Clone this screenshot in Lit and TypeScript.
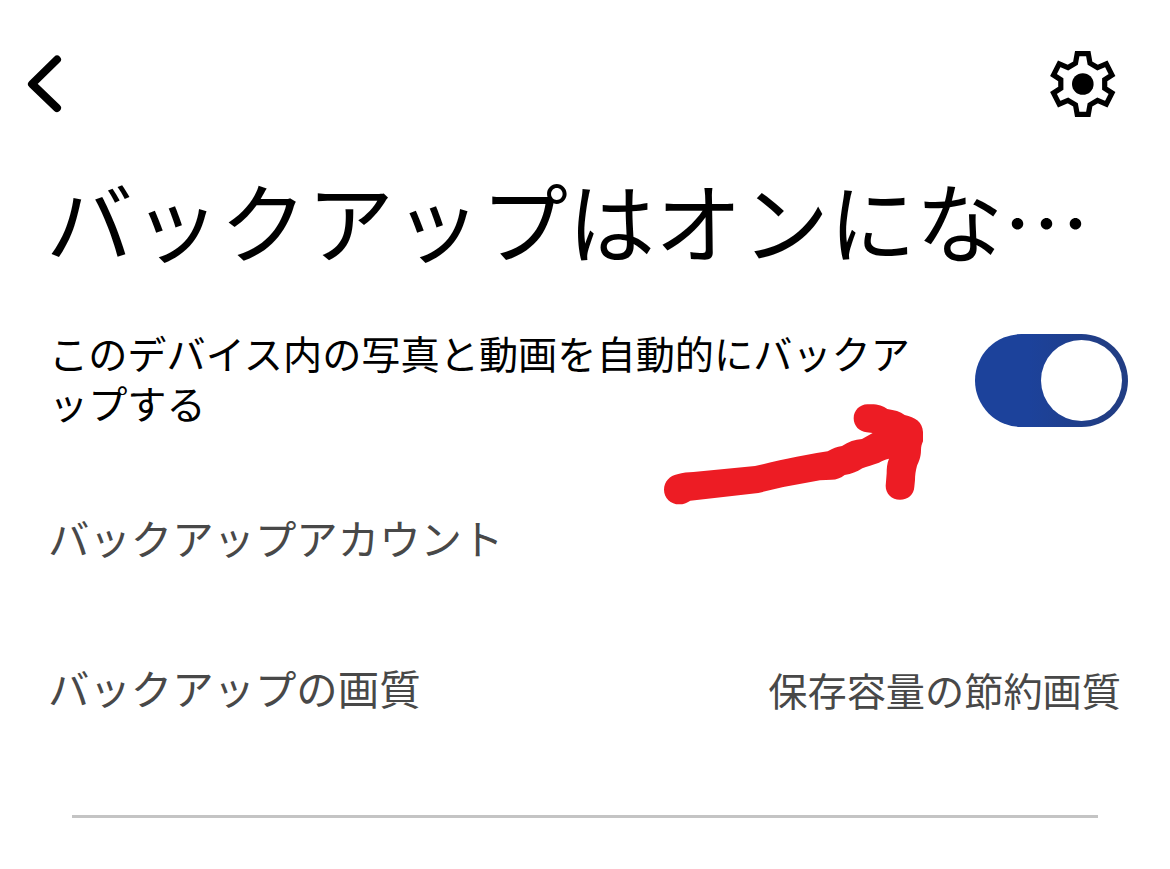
import { LitElement, html, css } from "lit";
import { customElement, property } from "lit/decorators.js";

@customElement("toggle-switch")
class ToggleSwitch extends LitElement {
  @property({ type: Boolean, reflect: true }) checked = false;

  static styles = css`
    :host {
      display: flex;
      box-sizing: border-box;
      flex: none;
      width: 153px;
      height: 93px;
      padding: 6px;
      border-radius: 47px;
      background: #999;
    }

    :host([checked]) {
      justify-content: flex-end;
      background: linear-gradient(90deg, #1c429b 35%, #213d84 85%);
    }

    .thumb {
      width: 81px;
      height: 81px;
      border-radius: 50%;
      background: #fff;
    }
  `;

  render() {
    return html`<div class="thumb"></div>`;
  }
}

@customElement("app-root")
class AppRoot extends LitElement {
  static styles = css`
    :host {
      display: flex;
      flex-direction: column;
      position: relative;
      box-sizing: border-box;
      width: 1170px;
      height: 869px;
      background: #fff;
      color: #000;
      font-family: "Noto Sans CJK JP", sans-serif;
      overflow: hidden;
    }

    svg {
      display: block;
    }

    header {
      display: flex;
      justify-content: space-between;
      padding: 45px 48px 0 22px;
      height: 78px;
    }

    h1 {
      margin: 31px 0 0 46px;
      font-size: 87px;
      line-height: 130px;
      font-weight: 400;
      white-space: nowrap;
    }

    .backup {
      display: flex;
      align-items: flex-start;
      justify-content: space-between;
      margin-top: 43px;
      padding: 0 42px 0 49px;
      height: 185px;
    }

    .backup p {
      margin: 0;
      width: 870px;
      font-size: 39.2px;
      line-height: 50px;
      word-break: break-all;
      line-break: anywhere;
    }

    .backup toggle-switch {
      margin-top: 7px;
    }

    .row {
      display: flex;
      justify-content: space-between;
      height: 150px;
      padding: 0 49px 0 48px;
      line-height: 50px;
      font-size: 41.4px;
      color: #484848;
    }

    .value {
      padding-top: 2px;
      font-size: 39.2px;
    }

    hr {
      width: 1026px;
      height: 3px;
      margin: 3px 0 0 72px;
      border: 0;
      background: #c4c4c4;
    }

    .arrow {
      position: absolute;
      left: 640px;
      top: 390px;
    }
  `;

  render() {
    return html`
      <header>
        <svg width="46" height="78" viewBox="0 0 46 78">
          <path
            d="M35 14.500 L10 39 L35 63"
            fill="none"
            stroke="#000"
            stroke-width="8"
            stroke-linecap="round"
            stroke-linejoin="round"
          />
        </svg>
        <svg width="78" height="78" viewBox="0 0 78 78">
          <path
            d="M33.200 8.700 H44.300 L46 18.200 L53.500 22.600 L62.300 18.900 L68 30 L60.700 34.700 V43.300 L68 48 L62.300 59.100 L53.500 55.400 L46 59.800 L44.300 69.300 H33.200 L31.500 59.800 L24 55.400 L15.200 59.100 L9.500 48 L16.800 43.300 V34.700 L9.500 30 L15.200 18.900 L24 22.600 L31.500 18.200 Z"
            fill="none"
            stroke="#000"
            stroke-width="5.200"
          />
          <circle cx="38.800" cy="39" r="10.800" />
        </svg>
      </header>
      <h1>バックアップはオンにな…</h1>
      <section class="backup">
        <p>このデバイス内の写真と動画を自動的にバックアップする</p>
        <toggle-switch checked></toggle-switch>
      </section>
      <div class="row">
        <span>バックアップアカウント</span>
      </div>
      <div class="row">
        <span>バックアップの画質</span>
        <span class="value">保存容量の節約画質</span>
      </div>
      <hr />
      <svg class="arrow" width="310" height="130" viewBox="0 0 930 390">
        <path
          fill="#ed1c24"
          d="M118 343 C92 343 72 324 72 299 C72 275 90 257 112 253 C128 247 145 247 160 246 L345 228 C390 218 430 207 470 200 L530 189 L563 184 C580 174 590 170 606 168 C625 155 645 149 666 147 L698 129 L680 127 C658 125 641 108 641 85 C641 61 659 44 682 43 C710 41 728 46 742 57 C763 60 781 65 794 75 C825 82 848 96 849 126 V154 C845 163 843 170 843 181 C843 202 836 216 831 227 C827 242 825 255 825 270 L823 290 C822 313 804 329 780 329 C755 329 737 311 737 287 L740 250 C740 236 741 220 747 206 C734 208 726 213 717 218 C699 225 680 229 667 235 C650 246 635 252 614 255 C600 265 590 269 575 269 L540 271 L430 291 L355 309 L151 332 C140 339 130 343 118 343 Z"
        />
      </svg>
    `;
  }
}
